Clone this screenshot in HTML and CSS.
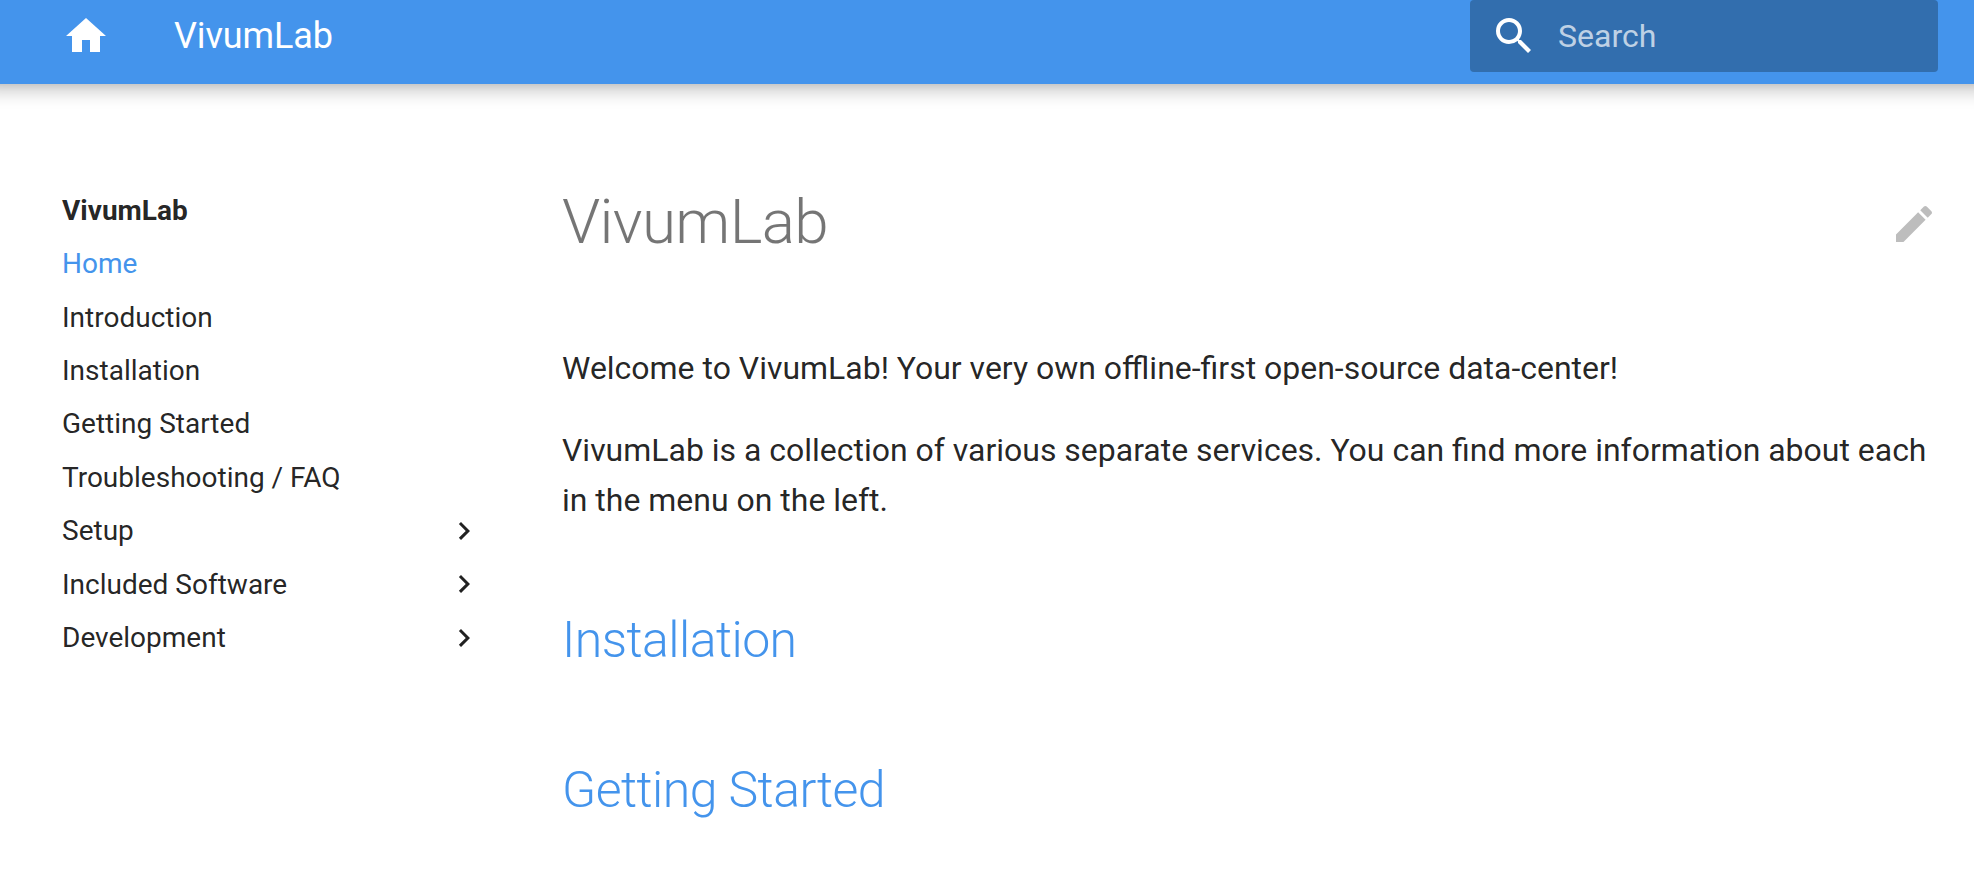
FILE: index.html
```html
<!DOCTYPE html>
<html lang="en">
<head>
<meta charset="utf-8">
<title>VivumLab</title>
<link rel="stylesheet" href="styles.css">
</head>
<body>
<header class="header">
  <a class="logo"><svg viewBox="0 0 24 24"><path d="M10 20v-6h4v6h5v-8h3L12 3 2 12h3v8h5z"/></svg></a>
  <span class="title">VivumLab</span>
  <div class="search">
    <svg viewBox="0 0 24 24"><path d="M9.5 3A6.5 6.5 0 0 1 16 9.5c0 1.61-.59 3.09-1.56 4.23l.27.27h.79l5 5-1.5 1.5-5-5v-.79l-.27-.27A6.516 6.516 0 0 1 9.5 16 6.5 6.5 0 0 1 3 9.5 6.5 6.5 0 0 1 9.5 3m0 2C7 5 5 7 5 9.5S7 14 9.5 14 14 12 14 9.5 12 5 9.5 5z"/></svg>
    <span>Search</span>
  </div>
</header>
<div class="main">
  <nav class="nav">
    <div class="item site">VivumLab</div>
    <div class="item active">Home</div>
    <div class="item">Introduction</div>
    <div class="item">Installation</div>
    <div class="item">Getting Started</div>
    <div class="item">Troubleshooting / FAQ</div>
    <div class="item"><span>Setup</span><svg viewBox="0 0 24 24"><path d="M8.59 16.58 13.17 12 8.59 7.41 10 6l6 6-6 6-1.41-1.42z"/></svg></div>
    <div class="item"><span>Included Software</span><svg class="raised" viewBox="0 0 24 24"><path d="M8.59 16.58 13.17 12 8.59 7.41 10 6l6 6-6 6-1.41-1.42z"/></svg></div>
    <div class="item"><span>Development</span><svg viewBox="0 0 24 24"><path d="M8.59 16.58 13.17 12 8.59 7.41 10 6l6 6-6 6-1.41-1.42z"/></svg></div>
  </nav>
  <article class="content">
    <div class="heading">
      <h1>VivumLab</h1>
      <svg viewBox="0 0 24 24"><path d="M20.71 7.04c.39-.39.39-1.04 0-1.41l-2.34-2.34c-.37-.39-1.02-.39-1.41 0l-1.84 1.83 3.75 3.75M3 17.25V21h3.75L17.81 9.93l-3.75-3.75L3 17.25z"/></svg>
    </div>
    <p>Welcome to VivumLab! Your very own offline-first open-source data-center!</p>
    <p>VivumLab is a collection of various separate services. You can find more information about each in the menu on the left.</p>
    <h2>Installation</h2>
    <h2>Getting Started</h2>
  </article>
</div>
</body>
</html>
```
FILE: styles.css
```css
* { box-sizing: border-box; }
body {
  margin: 0;
  height: 894px;
  overflow: hidden;
  background: #fff;
  color: rgba(0, 0, 0, .87);
  font-family: Roboto, sans-serif;
}
svg { display: block; fill: currentColor; flex: none; }
.header {
  display: flex;
  height: 84px;
  padding: 0 36px 0 62px;
  background: #4494ec;
  color: #fff;
  box-shadow: 0 -8px 8px 8px rgba(0, 0, 0, .11), 0 -8px 16px 16px rgba(0, 0, 0, .2);
}
.logo { padding-top: 12px; }
.logo svg { width: 48px; height: 48px; }
.title { margin-left: 64px; font-size: 36px; line-height: 72px; letter-spacing: -.1px; }
.search {
  display: flex;
  width: 468px;
  height: 72px;
  margin-left: auto;
  padding-left: 20px;
  border-radius: 4px;
  background: #326eae;
}
.search svg { width: 48px; height: 48px; margin-top: 12px; }
.search span {
  margin-left: 20px;
  color: rgba(255, 255, 255, .7);
  font-size: 32px;
  line-height: 72px;
}
.main { display: flex; padding: 0 36px 0 62px; }
.nav { flex: none; width: 414px; padding-top: 108.7px; font-size: 28px; line-height: 36px; }
.item {
  display: flex;
  align-items: center;
  justify-content: space-between;
  height: 36px;
  margin-bottom: 17.45px;
}
.item svg { width: 36px; height: 36px; margin-right: -6px; }
.item .raised { margin-bottom: 2px; }
.site { font-weight: 700; }
.active, h2 { color: #4494ec; }
.content { flex: 1; min-width: 0; margin-left: 86px; padding-top: 98px; }
.heading { display: flex; justify-content: space-between; height: 82px; margin-bottom: 79px; }
h1 { margin: 0; color: rgba(0, 0, 0, .54); font-size: 62px; font-weight: 300; line-height: 80px; letter-spacing: -.011em; }
.heading svg { width: 48px; height: 48px; margin-top: 18px; color: rgba(0, 0, 0, .26); }
p { margin: 0 0 32px; font-size: 31.98px; line-height: 50px; }
h2 { margin: 80px 0; font-size: 50px; font-weight: 300; line-height: 70px; letter-spacing: -.011em; }
```
